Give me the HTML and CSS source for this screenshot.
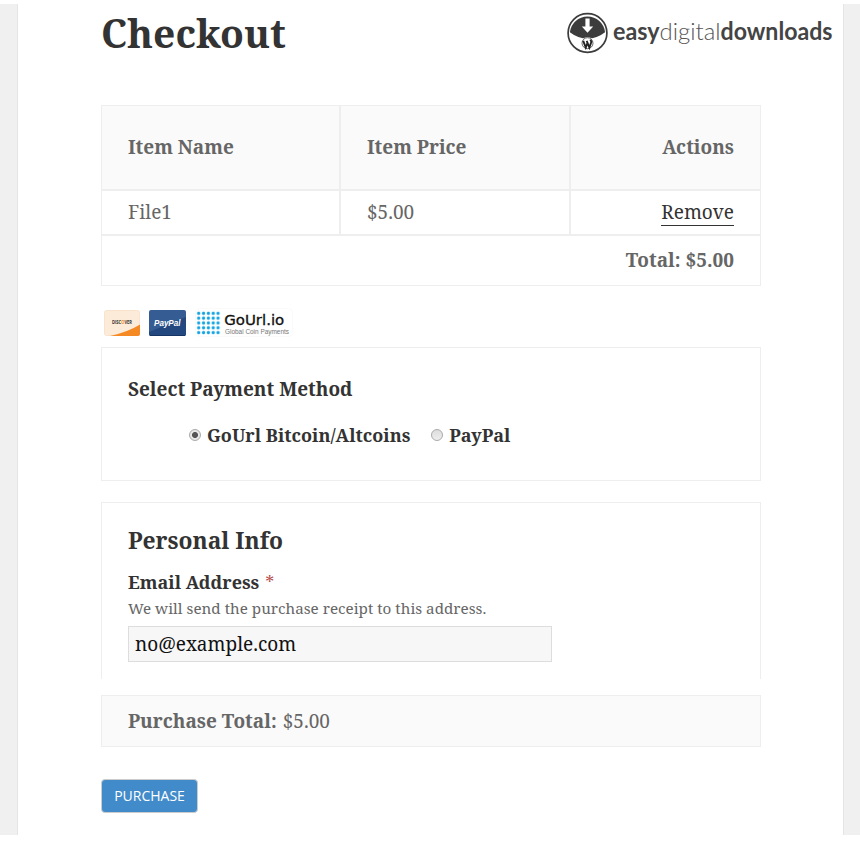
FILE: index.html
```html
<!DOCTYPE html>
<html lang="en">
<head>
<meta charset="utf-8">
<title>Checkout</title>
<link rel="stylesheet" href="styles.css">
</head>
<body>
<div class="page">
<main class="sheet">
  <header class="header">
    <h1 class="title">Checkout</h1>
    <svg class="logo" width="268" height="44" viewBox="0 0 268 44" role="img" aria-label="easydigitaldownloads">
      <circle cx="21.500" cy="22" r="19.400" fill="#fff" stroke="#3c3c3c" stroke-width="1.700"/>
      <path d="M3.900 21.200a17.700 17.700 0 0 1 35.200 0Q31 27.500 21.500 27.500T3.900 21.200Z" fill="#3c3c3c"/>
      <path d="M19.400 7.500h4.200v8h3.600l-5.700 6.300-5.700-6.300h3.600Z" fill="#fff"/>
      <circle cx="21.500" cy="32.200" r="6.300" fill="#fff"/>
      <g fill="none" stroke="#222"><circle cx="21.500" cy="32.200" r="5.500" stroke-width=".7"/><path d="M17.200 29.800l2.600 6.800 1.900-5.300M20.700 29.800l2.700 6.800 2-5.800-1-2.200" stroke-width="1.900"/></g>
      <text x="47" y="29" textLength="46.500" lengthAdjust="spacingAndGlyphs" class="logo-bold">easy</text>
      <text x="93.500" y="29" textLength="61" lengthAdjust="spacingAndGlyphs" class="logo-thin">digital</text>
      <text x="154.500" y="29" textLength="112" lengthAdjust="spacingAndGlyphs" class="logo-bold">downloads</text>
    </svg>
  </header>

  <div class="cart">
    <div class="cell head"><b>Item Name</b></div>
    <div class="cell head"><b>Item Price</b></div>
    <div class="cell head end"><b>Actions</b></div>
    <div class="cell"><span>File1</span></div>
    <div class="cell"><span>$5.00</span></div>
    <div class="cell end"><a class="remove">Remove</a></div>
    <div class="cell total end"><b>Total: $5.00</b></div>
  </div>

  <div class="icons">
    <svg width="36" height="27" viewBox="0 0 36 27">
      <rect x=".5" y=".5" width="35" height="25" rx="2" fill="#fdebd9" stroke="#f9e3cd"/>
      <path d="M6 26Q24 22 36 14.500V24q0 2-2 2Z" fill="#f58a24"/>
      <text x="8" y="13.500" textLength="20" lengthAdjust="spacingAndGlyphs" class="discover">DISC<tspan fill="#f58a24">O</tspan>VER</text>
    </svg>
    <svg width="37" height="27" viewBox="0 0 37 27">
      <rect width="37" height="26" rx="2" fill="#355c93"/>
      <path d="M0 22L37 7V24q0 2-2 2H2q-2 0-2-2Z" fill="#23487f"/>
      <path d="M1 25.500h35" stroke="#163463"/>
      <text x="5" y="15.500" textLength="26.500" lengthAdjust="spacingAndGlyphs" class="paypal">PayPal</text>
    </svg>
    <svg width="98" height="30" viewBox="0 0 98 30">
      <defs><pattern id="dots" x="1.300" y="2.900" width="4.830" height="4.830" patternUnits="userSpaceOnUse"><circle cx="2.400" cy="2.400" r="1.600" fill="#11a3e2"/></pattern></defs>
      <rect x=".5" y=".5" width="97" height="28" rx="4" fill="#fff" stroke="#fafafa"/>
      <rect x="1.300" y="2.900" width="24.150" height="24.150" fill="url(#dots)"/>
      <text x="29.200" y="17" textLength="60" lengthAdjust="spacingAndGlyphs" class="gourl">GoUrl.io</text>
      <text x="30" y="25.500" textLength="64" lengthAdjust="spacingAndGlyphs" class="coin">Global Coin Payments</text>
    </svg>
  </div>

  <section class="box method">
    <h2 class="label">Select Payment Method</h2>
    <div class="options">
      <i class="radio on"></i><b>GoUrl Bitcoin/Altcoins</b>
      <i class="radio second"></i><b>PayPal</b>
    </div>
  </section>

  <section class="box personal">
    <h2 class="subtitle">Personal Info</h2>
    <div class="email"><b>Email Address</b> <span class="star">*</span></div>
    <p class="hint">We will send the purchase receipt to this address.</p>
    <div class="input">no@example.com</div>
  </section>

  <div class="box sum"><b>Purchase Total:</b> <span>$5.00</span></div>
  <button class="button">PURCHASE</button>
</main>
</div>
</body>
</html>
```
FILE: styles.css
```css
* { box-sizing: border-box; }
body {
  margin: 0; height: 841px; padding: 4px 0 6px; background: #fff; overflow: hidden;
  font: 19px/30px "Noto Serif", "Droid Serif", "DejaVu Serif Condensed", "DejaVu Serif", serif;
  color: #666;
}
.page { height: 831px; padding: 0 16px 0 17px; background: #f0f0f0; }
.sheet { height: 831px; padding: 0 0 0 83px; background: #fff; border: solid #e5e5e5; border-width: 0 1px; }
.header { display: flex; justify-content: space-between; height: 101px; padding-right: 9px; }
h1, h2, p { margin: 0; }
.title { font-size: 39px; line-height: 58px; color: #333; }
.logo { margin-top: 7px; overflow: visible; }
.logo text { font-family: Lato, sans-serif; font-size: 24px; fill: #444; }
.logo .logo-bold { font-weight: 700; }
.logo .logo-thin { font-weight: 300; fill: #555; }

.cart { display: grid; grid-template-columns: 239px 230px 191px; grid-template-rows: 85px 45px 51px; width: 660px; }
.cell { display: flex; align-items: center; padding: 0 26px 2px; border: 1px solid #eee; white-space: nowrap; }
.head { background: #fafafa; }
.end { justify-content: flex-end; }
.total { grid-column: 1 / 4; }
.remove { margin-top: 2px; color: #333; border-bottom: 1px solid #333; line-height: 26px; }

.icons { display: flex; height: 61px; padding: 24px 0 0 3px; }
.icons svg { overflow: visible; }
.icons svg + svg { margin-left: 9px; }
.icons svg:last-child { margin-top: -2px; }
.discover { font: 700 5px "Open Sans", sans-serif; fill: #333; }
.paypal { font: italic 700 9.5px "Liberation Sans", sans-serif; fill: #fff; }
.gourl { font: 14px "DejaVu Sans", sans-serif; fill: #111; stroke: #111; stroke-width: .3px; }
.coin { font: 6.8px "Liberation Sans", sans-serif; fill: #777; }

.box { width: 660px; padding: 0 26px; border: 1px solid #eee; white-space: nowrap; }
.label { font-size: 19px; line-height: 30px; color: #333; }
.method { height: 134px; padding-top: 26px; }
.options { display: flex; align-items: center; margin: 16px 0 0 61px; color: #333; font-size: 18px; }
.radio { width: 12px; height: 12px; margin-right: 6px; border: 1px solid #aaa; border-radius: 50%; background: linear-gradient(#ddd, #eee); }
.radio.on { background: radial-gradient(circle, #555 0 2.600px, #e8e8e8 3.400px); }
.second { margin-left: 21px; }
.personal { height: 177px; margin-top: 21px; padding-top: 20px; border-bottom: 0; }
.subtitle { font-size: 22.800px; line-height: 36px; color: #333; }
.email { display: flex; gap: 6px; height: 27px; margin-top: 7px; font-size: 18px; line-height: 32px; color: #333; }
.star { color: #b94a48; }
.hint { height: 29px; font-size: 15.200px; line-height: 31px; letter-spacing: .02px; }
.input { width: 424px; height: 36px; margin-top: 4px; padding: 0 6px; border: 1px solid #ddd; background: #f7f7f7; color: #111; line-height: 34px; }
.sum { height: 52px; margin-top: 16px; background: #fafafa; line-height: 51px; display: flex; gap: 6px; }
.button {
  display: block; width: 97px; height: 34px; margin-top: 32px; padding: 0; border: 1px solid #ccc; border-radius: 4px;
  background: #428bca; color: #fff; font: 14px/30px "Open Sans", sans-serif; letter-spacing: 0;
}
```
